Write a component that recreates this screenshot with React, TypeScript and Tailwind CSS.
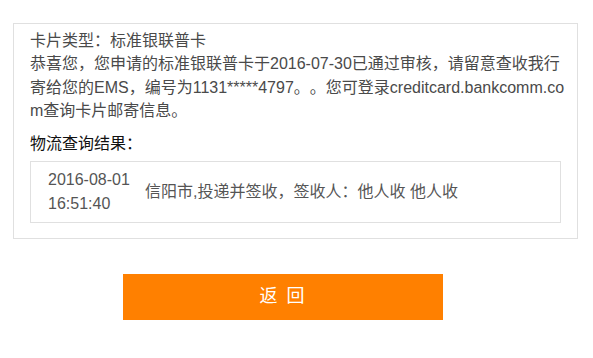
export default function App() {
  return (
    <div
      className="min-h-[358px] w-[593px] bg-white pt-[23px] pl-[13px] text-[16px] text-[#4a4a4a] [text-spacing-trim:space-all]"
      style={{ fontFamily: '"Liberation Sans", Arial, "Noto Sans CJK SC", sans-serif' }}
    >
      <div className="w-[565px] border border-[#e0e0e0] px-4 pt-[5px] pb-[15px]">
        <div className="-mr-[8px] leading-[23.4px] break-all">
          <p>卡片类型：标准银联普卡</p>
          <p>
            恭喜您，您申请的标准银联普卡于2016-07-30已通过审核，请留意查收我行寄给您的EMS，编号为1131*****4797。。您可登录creditcard.bankcomm.com查询卡片邮寄信息。
          </p>
        </div>
        <h3 className="mt-[9px] text-[16px] leading-[24px] text-[#111]">物流查询结果：</h3>
        <div className="mt-[5px] flex items-center border border-[#e0e0e0] py-[6px] pl-[17px]">
          <div className="w-[97px] leading-[24px] text-[#555]">
            <div>2016-08-01</div>
            <div>16:51:40</div>
          </div>
          <div className="leading-[24px] text-[#555]">信阳市,投递并签收，签收人：他人收 他人收</div>
        </div>
      </div>
      <div className="mt-[35px] pl-[110px]">
        <button className="flex h-[46px] w-[320px] items-center justify-center bg-[#ff8000] text-[18px] tracking-[2px] text-white">
          返 回
        </button>
      </div>
    </div>
  );
}
